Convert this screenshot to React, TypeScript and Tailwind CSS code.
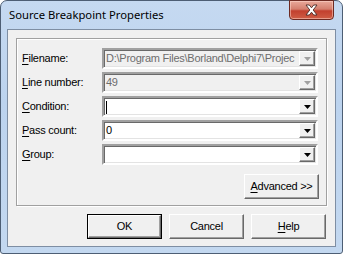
import React from "react";

const sunken =
  "border-t-[#a0a0a0] border-l-[#a0a0a0] border-b-white border-r-white border-2 border-solid";

function Arrow({ disabled }: { disabled?: boolean }) {
  return (
    <svg width="7" height="4" viewBox="0 0 7 4" className="block">
      <path d="M0 0H7L3.5 4Z" fill={disabled ? "#a0a0a0" : "#000"} />
    </svg>
  );
}

function Combo({
  value,
  disabled,
  caret
}: {
  value?: string;
  disabled?: boolean;
  caret?: boolean;
}) {
  return (
    <div
      className={`flex h-[21px] w-[216px] ${sunken} shadow-[inset_1px_1px_0_#696969,inset_-1px_-1px_0_#e3e3e3] ${
        disabled ? "bg-[#f0f0f0]" : "bg-white"
      }`}
    >
      <div
        className={`flex-1 overflow-hidden whitespace-nowrap pl-[2px] pt-[1px] leading-[15px] ${
          disabled ? "text-[#6d6d6d]" : "text-black"
        }`}
      >
        {caret && <span className="inline-block h-[13px] w-px bg-black align-middle" />}
        {value}
      </div>
      <div className="my-px mr-px flex h-[15px] w-[16px] items-center justify-center border border-solid border-t-white border-l-white border-b-[#696969] border-r-[#696969] bg-[#f0f0f0] shadow-[inset_-1px_-1px_0_#a0a0a0]">
        <Arrow disabled={disabled} />
      </div>
    </div>
  );
}

function Button({
  children,
  def
}: {
  children: React.ReactNode;
  def?: boolean;
}) {
  return (
    <div
      className={`flex h-[25px] w-[75px] ${
        def ? "border border-solid border-black" : ""
      }`}
    >
      <div className="flex flex-1 items-center justify-center border border-solid border-t-white border-l-white border-b-[#696969] border-r-[#696969] bg-[#f0f0f0] shadow-[inset_-1px_-1px_0_#a0a0a0]">
        {children}
      </div>
    </div>
  );
}

const U = ({ c }: { c: string }) => <span className="underline underline-offset-[2px]">{c}</span>;

export default function App() {
  const rows = [
    {
      label: <><U c="F" />ilename:</>,
      value: "D:\\Program Files\\Borland\\Delphi7\\Projec",
      disabled: true
    },
    { label: <><U c="L" />ine number:</>, value: "49", disabled: true },
    { label: <><U c="C" />ondition:</>, value: "", caret: true },
    { label: <><U c="P" />ass count:</>, value: "0" },
    { label: <><U c="G" />roup:</>, value: "" }
  ];

  return (
    <div className="h-[254px] w-[343px] overflow-hidden bg-white">
      <div className="relative flex h-[254px] w-[343px] flex-col rounded-t-[7px] rounded-b-[3px] border border-solid border-[#4d5e74] bg-[linear-gradient(180deg,#c5d9f1_0%,#bcd3ee_40%,#c3d8f0_100%)] px-[6px] pb-[6px] font-['Liberation_Sans',sans-serif] text-[11px] tracking-[-0.25px]">
        <div className="flex h-[28px] items-center pl-[2px] pt-[1px] font-['Noto_Sans',sans-serif] text-[11.25px] tracking-normal text-black">
          Source Breakpoint Properties
        </div>
        <div className="absolute right-[8px] top-[-1px] flex h-[20px] w-[45px] items-center justify-center rounded-b-[4px] border border-solid border-[#6d2a22] bg-[linear-gradient(180deg,#e9a99b_0%,#d47f6e_45%,#c2402e_55%,#cf5d45_100%)] shadow-[inset_0_0_0_1px_rgba(255,220,210,0.5)]">
          <svg width="15" height="12" viewBox="0 0 15 12">
            <path
              d="M2 1H5.3L7.5 3.8L9.7 1H13L9.2 6L13 11H9.7L7.5 8.2L5.3 11H2L5.8 6Z"
              fill="#fff"
              stroke="#4a2a26"
              strokeWidth="0.9"
              strokeLinejoin="round"
            />
          </svg>
        </div>
        <div className="flex flex-1 flex-col border border-solid border-[#7e8ea3] bg-[#f0f0f0] px-[8px] pb-[7px] pt-[8px]">
          <div className="flex h-[168px] flex-col border border-solid border-[#a0a0a0] pb-[6px] pl-[5px] pr-[7px] pt-[9px] shadow-[inset_1px_1px_0_#fff,1px_1px_0_#fff]">
            <div className="flex flex-col gap-[3px]">
              {rows.map((r, i) => (
                <div key={i} className="flex h-[21px] items-center">
                  <div className="w-[80px] text-black">{r.label}</div>
                  <Combo value={r.value} disabled={r.disabled} caret={r.caret} />
                </div>
              ))}
            </div>
            <div className="mt-[9px] flex justify-end">
              <Button>
                <span>
                  <U c="A" />dvanced &gt;&gt;
                </span>
              </Button>
            </div>
          </div>
          <div className="mt-[8px] flex justify-end gap-[7px] pr-px">
            <Button def>OK</Button>
            <Button>Cancel</Button>
            <Button>
              <span>
                <U c="H" />elp
              </span>
            </Button>
          </div>
        </div>
      </div>
    </div>
  );
}
